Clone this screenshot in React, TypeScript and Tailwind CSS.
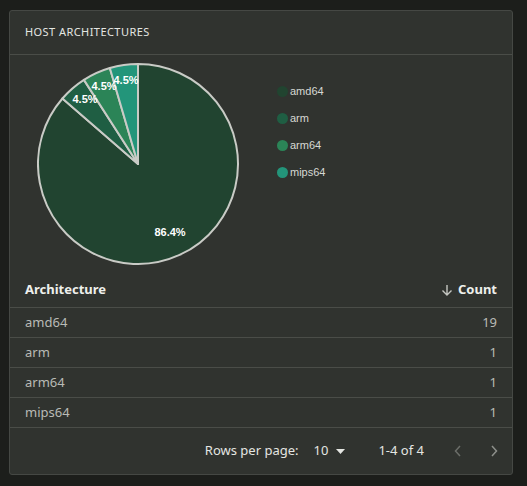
import React from "react";

const data = [
  { name: "amd64", v: 19, c: "#214430" },
  { name: "arm", v: 1, c: "#1f5e43" },
  { name: "arm64", v: 1, c: "#2b8457" },
  { name: "mips64", v: 1, c: "#23957a" },
];

function Pie() {
  const cx = 101, cy = 101, r = 100;
  const total = 22;
  let a = -Math.PI / 2;
  const slices = data.map((d) => {
    const span = (d.v / total) * Math.PI * 2;
    const a0 = a, a1 = a + span;
    a = a1;
    const large = span > Math.PI ? 1 : 0;
    const p = `M${cx},${cy} L${cx + r * Math.cos(a0)},${cy + r * Math.sin(a0)} A${r},${r} 0 ${large} 1 ${cx + r * Math.cos(a1)},${cy + r * Math.sin(a1)} Z`;
    return { p, c: d.c };
  });
  const labels = [
    { t: "86.4%", x: 133, y: 173 },
    { t: "4.5%", x: 48, y: 40 },
    { t: "4.5%", x: 67, y: 27 },
    { t: "4.5%", x: 89, y: 21 },
  ];
  return (
    <svg width="203" height="203" viewBox="0 0 203 203">
      {slices.map((s, i) => (
        <path key={i} d={s.p} fill={s.c} stroke="#c9cbc6" strokeWidth="2" strokeLinejoin="round" />
      ))}
      {labels.map((l, i) => (
        <text key={i} x={l.x} y={l.y} fill="#fff" fontSize="11" fontWeight="bold" textAnchor="middle" fontFamily="Liberation Sans, Arial, sans-serif">{l.t}</text>
      ))}
    </svg>
  );
}

export default function App() {
  return (
    <div className="w-[527px] h-[486px] bg-[#1c1e1b] pt-[10px] pl-[9px]" style={{ fontFamily: "'Noto Sans', sans-serif" }}>
      <div className="w-[504px] h-[465px] bg-[#30332f] border border-[#454844] rounded-[3px] flex flex-col">
        <div className="h-[44px] border-b border-[#4a4d48] flex items-center px-[15px] text-[11px] tracking-[0.04em] text-[#e4e6e2]">HOST ARCHITECTURES</div>
        <div className="h-[217px] flex pl-[27px] pt-[8px]">
          <Pie />
          <div className="ml-[37px] mt-[20px] flex flex-col gap-[11px] text-[11px] text-[#d6d8d3]" style={{ fontFamily: "'Liberation Sans', Arial, sans-serif" }}>
            {data.map((d) => (
              <div key={d.name} className="flex items-center gap-[2px] h-[16px]">
                <span className="w-[11px] h-[11px] rounded-full" style={{ background: d.c }} />
                {d.name}
              </div>
            ))}
          </div>
        </div>
        <div className="h-[36px] border-b border-[#4a4d48] flex items-center justify-between px-[15px] text-[13px] font-bold text-[#eef0ec]">
          <span>Architecture</span>
          <span className="flex items-center gap-[5px]">
            <svg width="12" height="12" viewBox="0 0 12 12" fill="none" stroke="#c4c6c1" strokeWidth="1.4"><path d="M6 1v10M1.5 6.5 6 11l4.5-4.5" /></svg>
            Count
          </span>
        </div>
        {data.map((d) => (
          <div key={d.name} className="h-[30px] border-b border-[#4a4d48] flex items-center justify-between px-[15px] text-[13px] text-[#b9bbb6]">
            <span>{d.name}</span>
            <span>{d.v}</span>
          </div>
        ))}
        <div className="flex-1 flex items-center justify-end pr-[14px] text-[13px] text-[#e4e6e2]">
          <span>Rows per page:</span>
          <span className="ml-[15px] flex items-center gap-[8px]">10<svg width="9" height="5" viewBox="0 0 9 5"><path d="M0 0h9L4.5 5z" fill="#e4e6e2" /></svg></span>
          <span className="ml-[33px]">1-4 of 4</span>
          <svg className="ml-[30px]" width="8" height="12" viewBox="0 0 8 12" fill="none" stroke="#6b6e69" strokeWidth="1.5"><path d="M6 1 1.5 6 6 11" /></svg>
          <svg className="ml-[28px]" width="8" height="12" viewBox="0 0 8 12" fill="none" stroke="#8d908b" strokeWidth="1.5"><path d="M2 1l4.5 5L2 11" /></svg>
        </div>
      </div>
    </div>
  );
}
